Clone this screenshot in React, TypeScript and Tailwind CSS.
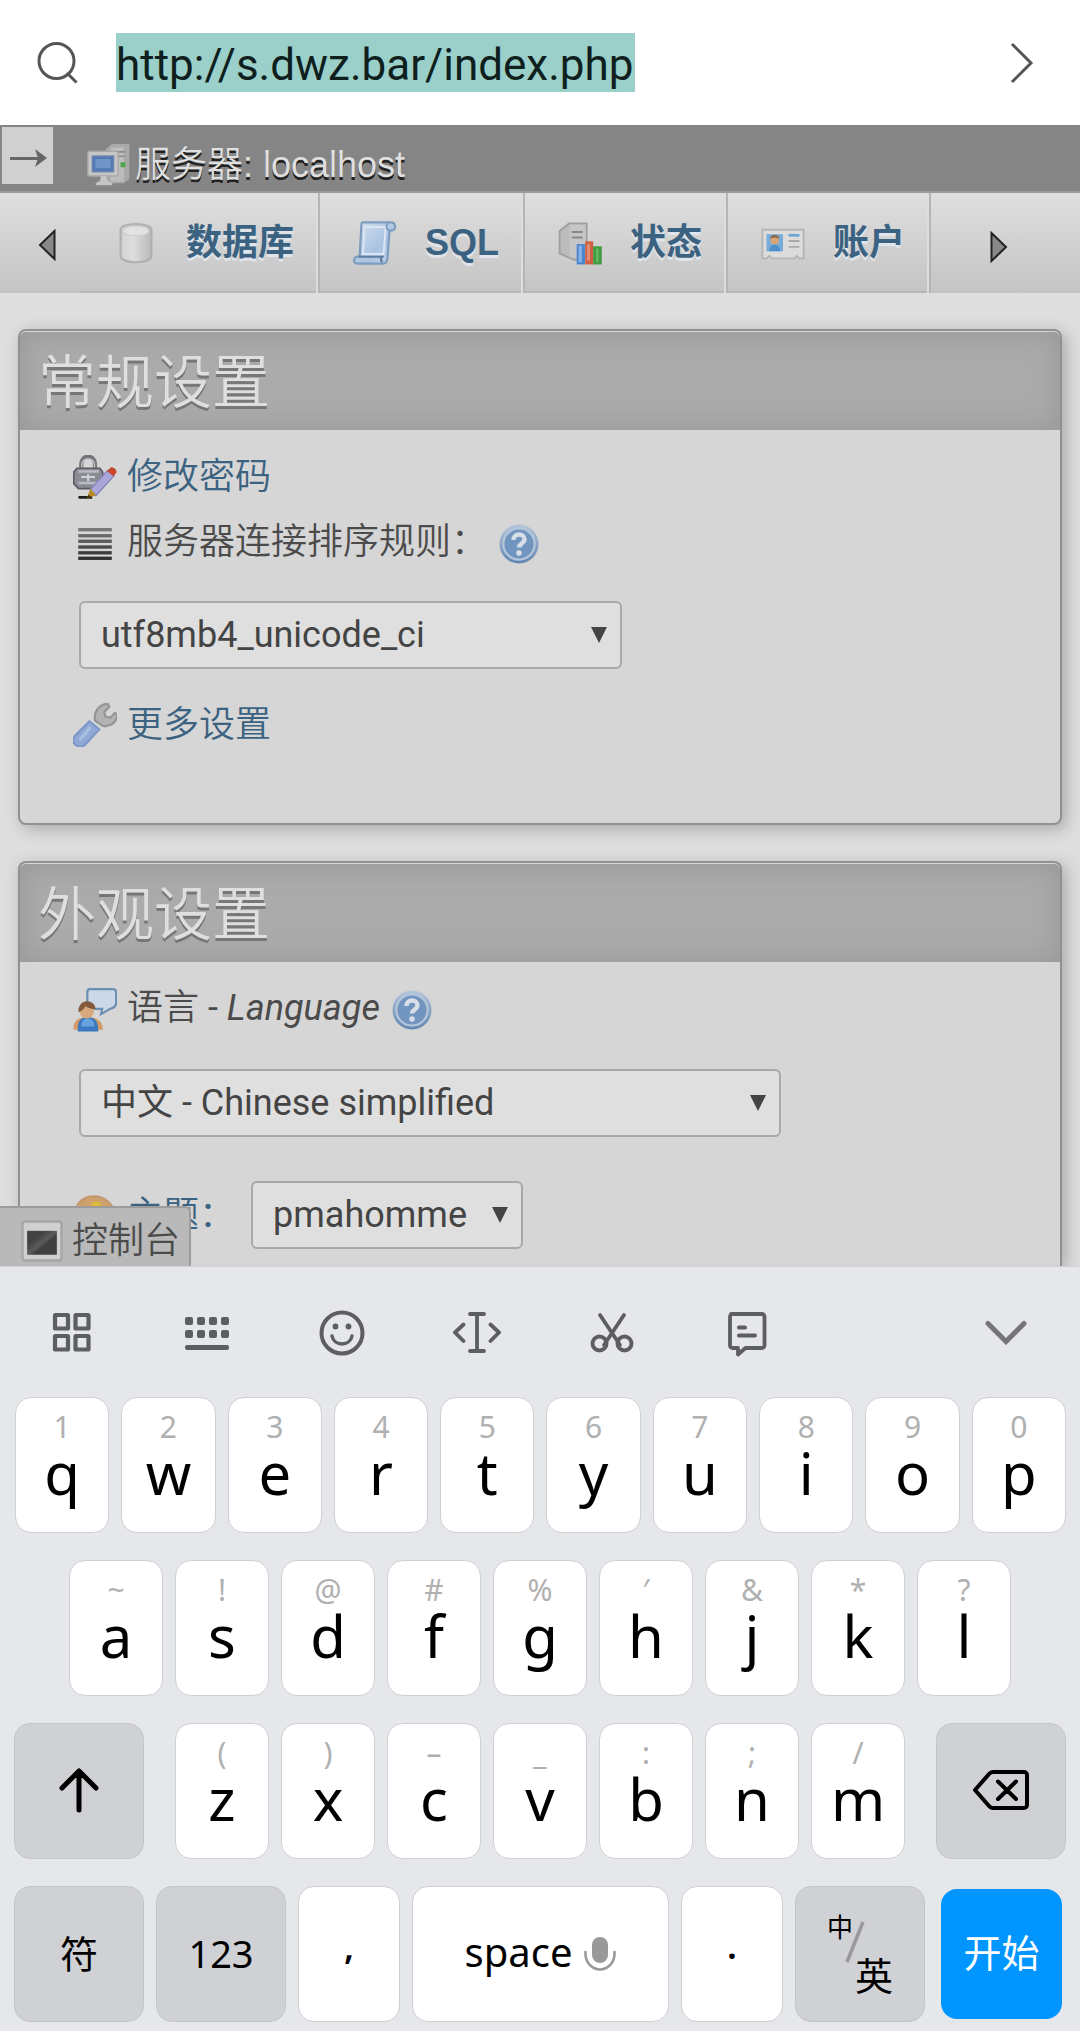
import React from "react";

const NOTO = "font-['Noto_Sans','Noto_Sans_CJK_SC',sans-serif]";

/* ---------- page icons, drawn on a 16 unit grid ---------- */

type IconProps = { children: React.ReactNode };

function PageIcon({ children }: IconProps) {
  return (
    <svg viewBox="0 0 16 16" className="size-11 shrink-0" aria-hidden="true">
      {children}
    </svg>
  );
}

const ServerIcon = () => (
  <PageIcon>
    <path d="M7 2 9 0.4h6.4V13l-2 1.6H7z" fill="#a9a9a9" />
    <path d="M8.6 1.6h4.8V14H8.6z" fill="#bdbdbd" />
    <path d="M10 3.2h4M10 4.8h4" stroke="#8c8c8c" strokeWidth=".6" />
    <rect x="12.2" y="7" width="1.8" height="1.8" fill="#4fa64f" />
    <rect x=".3" y="3" width="11" height="9" rx=".6" fill="#c6c6c6" stroke="#a8a8a8" strokeWidth=".5" />
    <rect x="2" y="4.8" width="7.6" height="5.6" fill="#5279b4" stroke="#6682ad" strokeWidth=".6" />
    <rect x="3" y="5.8" width="5.6" height="3.4" fill="#7094c8" />
    <path d="M5 12h2l.4 1.6 1.8.9v.9H3.2v-.9l1.6-.9z" fill="#c4c4c4" />
  </PageIcon>
);

const DatabaseIcon = () => (
  <PageIcon>
    <defs>
      <linearGradient id="cyl" x1="0" x2="1">
        <stop offset="0" stopColor="#d2d2d2" />
        <stop offset=".4" stopColor="#dedede" />
        <stop offset="1" stopColor="#b8b8b8" />
      </linearGradient>
    </defs>
    <path d="M2.4 3.2C2.4.4 13.6.4 13.6 3.2v9.4c0 3.2-11.2 3.2-11.2 0z" fill="url(#cyl)" stroke="#b0b0b0" strokeWidth=".8" />
    <ellipse cx="8" cy="3.6" rx="4.8" ry="1.8" fill="#e2e2e2" stroke="#cccccc" strokeWidth=".4" />
  </PageIcon>
);

const SqlIcon = () => (
  <PageIcon>
    <defs>
      <linearGradient id="scroll" x1="0" y1="0" x2="1" y2="1">
        <stop offset="0" stopColor="#d7e2ee" />
        <stop offset=".6" stopColor="#a9c3e2" />
        <stop offset="1" stopColor="#c6d6e8" />
      </linearGradient>
    </defs>
    <path d="M3.4.5h10.4c2 0 2 3 .2 3h-.7l-.8 10.2c-.1 1-.6 1.800-1.600 1.800H1.600c-1.700 0-1.600-2.400.2-2.600h.6L3 2.600C3 1.500 3 .5 3.400.5z" fill="url(#scroll)" stroke="#7d9dbf" strokeWidth=".8" />
    <path d="M4.200 2.200 3.600 12h7.500l.8-9.800z" fill="none" stroke="#dbe6f2" strokeWidth=".7" />
    <path d="M2 13h8.600c-.6.6-.5 1.600.1 2" fill="none" stroke="#5d7da3" strokeWidth=".8" />
    <path d="M12.800.8c-1 .6-.8 2.200.2 2.600" fill="none" stroke="#7d9dbf" strokeWidth=".7" />
  </PageIcon>
);

const StatusIcon = () => (
  <PageIcon>
    <path d="M.6 3.600 4 .9h6.400v13L6 14.200.6 11.800z" fill="#bcbcbc" stroke="#a0a0a0" strokeWidth=".7" />
    <path d="M4.200 1.300h5.800v11.900H4.200z" fill="#c6c6c6" />
    <path d="M5 4h4M5 6h4" stroke="#888" strokeWidth=".7" />
    <rect x="6.800" y="8.400" width="3" height="7.400" fill="#4a85cf" />
    <rect x="7.500" y="9" width="1.200" height="6" fill="#86b0e6" />
    <rect x="9.900" y="7.400" width="2.900" height="8.400" fill="#cf5f42" />
    <rect x="10.600" y="8.400" width="1" height="6" fill="#e0917a" />
    <rect x="12.800" y="9.200" width="3.100" height="6.600" fill="#3d9a3d" />
    <rect x="13.800" y="10" width="1" height="5" fill="#64b564" />
  </PageIcon>
);

const AccountIcon = () => (
  <PageIcon>
    <path d="M.5 3.200h15v10.400h-1.700l-.8-.9-.9.9H3.900l-.9-.9-.8.9H.5z" fill="#dcdcdc" stroke="#b5b5b5" strokeWidth=".7" />
    <rect x="2" y="4.800" width="6" height="6.200" fill="#79add9" />
    <circle cx="5" cy="7" r="1.600" fill="#d6a578" />
    <path d="M3.300 6.500c.2-2 3.200-2 3.400 0-.8-.6-2.600-.6-3.400 0z" fill="#8a6a4a" />
    <path d="M3 11c0-3.200 4-3.200 4 0z" fill="#4e8fcb" />
    <path d="M10 5.200h4" stroke="#6fa6d6" strokeWidth="1" />
    <path d="M10 7.300h4M10 9.400h4" stroke="#a9a9a9" strokeWidth=".7" />
  </PageIcon>
);

const PasswordIcon = () => (
  <PageIcon>
    <path d="M3 5.500V3.200C3-.3 8-.3 8 3.200v2.300" fill="none" stroke="#74747c" strokeWidth="1.500" />
    <path d="M3.200 5V3.400c0-2.600 4.600-2.600 4.600 0V5" fill="none" stroke="#c3c3c8" strokeWidth=".5" />
    <path d="M1.400 4.800h8.400L10.800 6.200v4.200l-1.300 1.800H2L.3 10.400V6.200z" fill="#8b8b93" stroke="#5c5c64" strokeWidth=".6" />
    <path d="M2 6h7.400M2 10.200h7" stroke="#bcbcc4" strokeWidth=".9" />
    <path d="M3 8h5M5.500 7v2.500" stroke="#d2d2da" strokeWidth=".8" />
    <path d="M2 15.400h5" stroke="#1c1c1c" strokeWidth="1" />
    <path d="M6.300 12.500 12.600 5.600l2.300 2L8.300 14.800z" fill="#a9a6da" stroke="#8683b8" strokeWidth=".5" />
    <path d="M12.400 5.800 13.600 4.600c1-.5 2.400.8 2.200 1.800l-1.100 1.300z" fill="#c9452e" />
    <path d="M6.300 12.300 5 15.800l3.400-1.200z" fill="#b78b23" />
    <path d="m5.600 14.500-.6 1.300 1.700-.6z" fill="#3b2b0c" />
  </PageIcon>
);

const CollationIcon = () => (
  <PageIcon>
    {[2.8, 5, 7, 9.1, 11.2, 13.2].map((y, i) => (
      <rect key={y} x="1.900" y={y - 0.6} width="12.200" height="1.200" fill={["#777", "#6a6a6a", "#5a5a5a", "#4a4a4a", "#3c3c3c", "#303030"][i]} />
    ))}
  </PageIcon>
);

const HelpIcon = () => (
  <PageIcon>
    <defs>
      <linearGradient id="help" x1="0" y1="0" x2="0" y2="1">
        <stop offset="0" stopColor="#b5c6da" />
        <stop offset="1" stopColor="#6185b1" />
      </linearGradient>
    </defs>
    <circle cx="8" cy="8" r="7.100" fill="url(#help)" />
    <circle cx="8" cy="8" r="5.700" fill="#7195bf" stroke="#b4c6dc" strokeWidth=".8" />
    <path d="M6 6.500c0-2.600 4-2.600 4-.2 0 1.500-2 1.500-2 3" fill="none" stroke="#d8dfe8" strokeWidth="1.600" />
    <circle cx="8" cy="11.300" r="1" fill="#d8dfe8" />
  </PageIcon>
);

const WrenchIcon = () => (
  <PageIcon>
    <path d="M8 6.400c-.5-2.800 1-5.700 4.600-6.200l.6 1.200-1.800 1.800.4 1.700 1.900.4 1.400-1.600.9.2c.2 3-2.200 4.900-5.200 4.400z" fill="#b3b3b3" stroke="#959595" strokeWidth=".8" />
    <path d="M6 6.600 9.600 9.600 4.400 15.200c-1.200 1.200-2.600.8-3.600 0-1-1-.9-2.400 0-3.400z" fill="#8fa9d6" stroke="#7a96c6" strokeWidth=".7" />
    <path d="M6.400 8.800 2.400 13.500" stroke="#a9bde0" strokeWidth="1.300" />
  </PageIcon>
);

const LanguageIcon = () => (
  <PageIcon>
    <path d="M6.200.4h8.200c.8 0 1.300.6 1.300 1.300v3.600c0 1.200-.9 2-2 2.200l-3.500 2 .4-1.900H8C6.400 7.200 5.200 6.200 5.200 4.800V1.600C5.200.9 5.600.4 6.200.4z" fill="#ccd8e7" stroke="#6b8fb3" strokeWidth=".8" />
    <path d="M.2 15.200c-.2-3 1.200-4.600 5-4.600s5.800 1.600 5.600 4.600z" fill="#d29b68" />
    <path d="M1.700 15.800c0-3.800.8-5.200 3.600-5.200s3.900 1.400 3.900 5.200z" fill="#3c78bf" />
    <path d="M3 14c0-2 1-2.800 2.400-2.800S7.800 12 7.800 14z" fill="#68a3e0" />
    <circle cx="5" cy="8.500" r="2.600" fill="#d8a87c" />
    <path d="M2 8.800C1.600 3.600 8 3.700 8.200 7.600 6.600 7.700 5 6.900 4.500 6.500 4 7.700 3 8.300 2 8.800z" fill="#84583a" />
  </PageIcon>
);

const ThemeIcon = () => (
  <PageIcon>
    <path d="M1 7c0-3.600 3-5.800 6.600-5.800S15 3.800 15 7.500 12 14 8 14c-3 0-2-2.400-3.400-3.300C3.200 9.800 1 9.500 1 7z" fill="#cf9f6c" stroke="#c39a70" strokeWidth=".7" />
    <circle cx="8.500" cy="5" r="2" fill="#dcb93a" />
    <circle cx="12" cy="8" r="1.500" fill="#c9623c" />
  </PageIcon>
);

const ConsoleIcon = () => (
  <PageIcon>
    <defs>
      <linearGradient id="term" x1="0" y1="0" x2="1" y2="1">
        <stop offset=".3" stopColor="#424242" />
        <stop offset=".5" stopColor="#5c5c5c" />
        <stop offset=".6" stopColor="#404040" />
      </linearGradient>
    </defs>
    <rect x=".9" y=".9" width="14.200" height="14.200" rx="1" fill="#d0d0d0" stroke="#a6a6a6" strokeWidth=".9" />
    <rect x="2.600" y="4.300" width="10.800" height="8.700" fill="url(#term)" />
  </PageIcon>
);

/* ---------- building blocks ---------- */

function Card({ title, last, children }: { title: string; last?: boolean; children: React.ReactNode }) {
  return (
    <section
      className={
        last
          ? "mx-[18px] mt-9 rounded-t-lg border-2 border-b-0 border-[#919191] bg-[#d6d6d6] shadow-[4px_4px_16px_#a8a8a8]"
          : "mx-[18px] mt-9 rounded-lg border-2 border-[#919191] bg-[#d6d6d6] shadow-[4px_4px_16px_#a8a8a8]"
      }
    >
      <h2 className="mt-px flex h-[98px] items-center rounded-t-md bg-[#ababab] px-[18px] pt-1 text-[58px] font-[350] text-[#dfdfdf] shadow-[inset_0_0_30px_#969696] [text-shadow:0_3px_0_#777]">
        {title}
      </h2>
      <div className={last ? "pl-[53px] pt-[26px] pb-[17px]" : "pl-[53px] pt-[26px] pb-[74px]"}>{children}</div>
    </section>
  );
}

function Select({ id, value, size, label }: { id: string; value: string; size: string; label?: string }) {
  return (
    <div className={`relative ${size}`}>
      <select
        id={id}
        aria-label={label}
        className="h-[68px] w-full appearance-none rounded-md border-2 border-[#a9a9a9] bg-[#dfdfdf] pl-5 text-[36px] font-normal text-[#444]"
      >
        <option>{value}</option>
      </select>
      <svg viewBox="0 0 16 16" className="pointer-events-none absolute right-[15px] top-[26px] size-4" aria-hidden="true">
        <path d="M0 0h16L8 16z" fill="#444" />
      </svg>
    </div>
  );
}

function Tab({ icon, label }: { icon: React.ReactNode; label: string }) {
  return (
    <a
      href="#"
      className="flex items-center gap-7 border-r-2 border-[#b5b5b5] pl-[33px] pr-6 font-['Liberation_Sans','Noto_Sans_CJK_SC',sans-serif] text-[36px] font-bold text-[#3b6281] shadow-[inset_-2px_0_0_#dedede,inset_0_-2px_0_#b8b8b8] [text-shadow:0_3px_0_#dfe5ea]"
    >
      {icon}
      {label}
    </a>
  );
}

function LetterKey({ hint, letter }: { hint: string; letter: string }) {
  return (
    <button className="flex h-[136px] min-w-0 flex-1 flex-col items-center rounded-2xl border border-[#cfd0d3] bg-white pt-[11px]">
      <span className="text-[30px] leading-9 text-[#b0b0b0]">{hint}</span>
      <span className="text-[58px] leading-14 text-black">{letter}</span>
    </button>
  );
}

const DARK_KEY = "flex h-[136px] w-[130px] shrink-0 items-center justify-center rounded-2xl border border-[#c5c6ca] bg-[#d0d1d5] pb-[2px] text-[38px] text-black";
const LIGHT_KEY = "flex h-[136px] items-center justify-center rounded-2xl border border-[#cfd0d3] bg-white text-black";

const ROW1 = ["1q", "2w", "3e", "4r", "5t", "6y", "7u", "8i", "9o", "0p"];
const ROW2 = ["~a", "!s", "@d", "#f", "%g", "′h", "&j", "*k", "?l"];
const ROW3 = ["(z", ")x", "–c", "_v", ":b", ";n", "/m"];

function ToolButton({ label, children }: { label: string; children: React.ReactNode }) {
  return (
    <button aria-label={label} className="flex w-[135px] items-center justify-center text-[#5d5e60]">
      <svg viewBox="0 0 48 48" className="size-12" fill="none" stroke="currentColor" strokeWidth="4" strokeLinecap="round" strokeLinejoin="round">
        {children}
      </svg>
    </button>
  );
}

function Keyboard() {
  return (
    <div className={`border-t border-[#d0d1d1] bg-[#e6e7eb] pb-[9px] ${NOTO}`}>
      <div className="flex h-[130px] items-stretch pl-1 pt-[2px]">
        <ToolButton label="Menu">
          <g strokeWidth="4.200">
            <rect x="7" y="6" width="13" height="13.500" rx=".6" />
            <rect x="27.500" y="6" width="13" height="13.500" rx=".6" />
            <rect x="7" y="27" width="13" height="13.500" rx=".6" />
            <rect x="27.500" y="27" width="13" height="13.500" rx=".6" />
          </g>
        </ToolButton>
        <ToolButton label="Keyboard">
          <g fill="currentColor" stroke="none">
            {[2, 14, 26, 38].map((x) => (
              <React.Fragment key={x}>
                <rect x={x} y="8" width="8" height="8" rx="2" />
                <rect x={x} y="21" width="8" height="8" rx="2" />
              </React.Fragment>
            ))}
            <rect x="2" y="36" width="44" height="5" rx="2" />
          </g>
        </ToolButton>
        <ToolButton label="Emoji">
          <circle cx="24" cy="24" r="20.500" />
          <circle cx="17.500" cy="17.500" r="2.900" fill="currentColor" stroke="none" />
          <circle cx="30.500" cy="17.500" r="2.900" fill="currentColor" stroke="none" />
          <path d="M14 27c2 10.500 18 10.500 20 0" strokeWidth="3.500" />
        </ToolButton>
        <ToolButton label="Move cursor">
          <path d="M24 5v37M17 5h14M17 42h14M10.500 15.500 2 23.500l8.500 8.500M37.500 15.500l8.500 8-8.500 8.500" strokeWidth="3.800" />
        </ToolButton>
        <ToolButton label="Cut">
          <path d="M12 6 32 36M36 6 16 36" strokeWidth="3.800" />
          <circle cx="11.500" cy="34.500" r="7" />
          <circle cx="36.500" cy="34.500" r="7" />
        </ToolButton>
        <ToolButton label="Notes">
          <path d="M8 5h31a2.500 2.500 0 0 1 2.500 2.500v29a2.500 2.500 0 0 1-2.500 2.500H22.500L15 45.500V39H9.500A2.500 2.500 0 0 1 7 36.500v-29A2.500 2.500 0 0 1 9.500 5" strokeWidth="3.800" />
          <path d="M16 18.500h6M16 26.500h16" />
        </ToolButton>
        <button aria-label="Hide keyboard" className="ml-auto mr-[50px] flex items-center text-[#747578]">
          <svg viewBox="0 0 48 48" className="size-12" fill="none" stroke="currentColor" strokeWidth="5" strokeLinecap="round">
            <path d="m6 14.500 18 18 18-18" />
          </svg>
        </button>
      </div>

      <div className="flex flex-col gap-[27px] px-[14px]">
        <div className="flex gap-3 pl-px">
          {ROW1.map((k) => (
            <LetterKey key={k} hint={k[0]} letter={k[1]} />
          ))}
        </div>
        <div className="flex gap-3 px-[55px]">
          {ROW2.map((k) => (
            <LetterKey key={k} hint={k[0]} letter={k[1]} />
          ))}
        </div>
        <div className="flex gap-[31px]">
          <button aria-label="Shift" className={DARK_KEY}>
            <svg viewBox="0 0 48 48" className="size-12" fill="none" stroke="currentColor" strokeWidth="5" strokeLinecap="round" strokeLinejoin="round">
              <path d="M24 44V5M7 22 24 5l17 17" />
            </svg>
          </button>
          <div className="flex flex-1 gap-3">
            {ROW3.map((k) => (
              <LetterKey key={k} hint={k[0]} letter={k[1]} />
            ))}
          </div>
          <button aria-label="Backspace" className={DARK_KEY}>
            <svg viewBox="0 0 56 40" className="h-10 w-14" fill="none" stroke="currentColor" strokeWidth="4" strokeLinecap="round" strokeLinejoin="round">
              <path d="M20 2h31a3 3 0 0 1 3 3v30a3 3 0 0 1-3 3H20c-1.500 0-2.500-.6-3.500-1.500L2 20 16.500 3.500C17.500 2.600 18.500 2 20 2zM25 11.500l18 17.500M43 11.500 25 29" />
            </svg>
          </button>
        </div>
        <div className="flex gap-3">
          <button className={DARK_KEY}>符</button>
          <button className={DARK_KEY}>123</button>
          <button className={`${LIGHT_KEY} w-[102px] pb-4 text-[36px] font-semibold`}>,</button>
          <button className={`${LIGHT_KEY} flex-1 gap-3 pb-1 text-[40px]`}>
            space
            <svg viewBox="0 0 32 36" className="mt-1 h-9 w-8" fill="none" aria-hidden="true">
              <rect x="8" y="1" width="16" height="26" rx="8" fill="#999" />
              <path d="M1.500 16v2a14.500 15.500 0 0 0 29 0v-2" stroke="#999" strokeWidth="2.600" strokeLinecap="round" />
            </svg>
          </button>
          <button className={`${LIGHT_KEY} w-[102px] pb-4 text-[36px] font-semibold`}>.</button>
          <button className={DARK_KEY}>
            <span className="flex h-20 items-stretch">
              <span className="text-[26px] leading-7">中</span>
              <svg viewBox="0 0 20 42" className="-ml-2 -mr-[10px] mt-2 h-[42px] w-5" aria-hidden="true">
                <path d="M18 1 2 41" stroke="#999" strokeWidth="3.500" />
              </svg>
              <span className="self-end leading-9">英</span>
            </span>
          </button>
          <button className="mx-1 my-[3px] flex w-[121px] shrink-0 items-center justify-center rounded-2xl bg-[#0095ff] pb-1 text-[38px] text-white">
            开始
          </button>
        </div>
      </div>
    </div>
  );
}

export default function App() {
  return (
    <div className="flex flex-col bg-[#dedede] font-[Roboto,'Noto_Sans_CJK_SC',sans-serif] text-[36px] text-[#4b4b4b]">
      <form className="flex h-[125px] items-center bg-white pl-[36px] pr-9" onSubmit={(e) => e.preventDefault()}>
        <svg viewBox="0 0 44 44" className="size-11 shrink-0" fill="none" stroke="#555" strokeWidth="3" aria-hidden="true">
          <circle cx="20.500" cy="20" r="17.500" />
          <path d="m31 32 9.500 9.500" />
        </svg>
        <input
          aria-label="Address"
          defaultValue="http://s.dwz.bar/index.php"
          className="ml-9 h-[59px] bg-[#9bcfc9] pr-[2px] pt-1 text-[44px] text-[#0e1f1d] outline-none field-sizing-content"
        />
        <button aria-label="Go" className="ml-auto">
          <svg viewBox="0 0 44 44" className="size-11" fill="none" stroke="#555" strokeWidth="3">
            <path d="m12 3 19 19-19 19" />
          </svg>
        </button>
      </form>

      <main className="relative overflow-hidden">
        <header className="flex h-[68px] items-start border-b-2 border-[#9a9a9a] bg-[#858585]">
          <button aria-label="Open navigation" className="ml-[2px] mt-[2px] flex h-[57px] w-[51px] items-center justify-center bg-[#d0d0d0] pt-1">
            <svg viewBox="0 0 40 20" className="h-5 w-10" aria-hidden="true">
              <path d="M2 9h28v3H2z" fill="#666" />
              <path d="m27 1 12 9-12 9 3-9z" fill="#666" />
            </svg>
          </button>
          <a
            href="#"
            className="ml-[34px] mt-[18px] flex items-center gap-1 font-['Liberation_Sans','Noto_Sans_CJK_SC',sans-serif] leading-[44px] font-[350] text-[#dfdfdf] [text-shadow:0_3px_0_#222]"
          >
            <ServerIcon />
            服务器: localhost
          </a>
        </header>

        <nav className="flex h-[100px] bg-linear-to-b from-[#dfdfdf] to-[#c4c4c4]">
          <button aria-label="Scroll tabs left" className="flex w-[81px] items-center justify-center pl-3 pt-1">
            <svg viewBox="0 0 18 32" className="h-8 w-[18px]" aria-hidden="true">
              <path d="M16.500 2v28L2 16z" fill="#888" stroke="#222" strokeWidth="2" />
            </svg>
          </button>
          <Tab icon={<DatabaseIcon />} label="数据库" />
          <Tab icon={<SqlIcon />} label="SQL" />
          <Tab icon={<StatusIcon />} label="状态" />
          <Tab icon={<AccountIcon />} label="账户" />
          <button aria-label="Scroll tabs right" className="flex flex-1 items-center pl-[59px] pt-2">
            <svg viewBox="0 0 18 32" className="h-8 w-[18px]" aria-hidden="true">
              <path d="M1.500 2v28L16 16z" fill="#888" stroke="#222" strokeWidth="2" />
            </svg>
          </button>
        </nav>

        <Card title="常规设置">
          <a href="#" className="flex h-11 items-center gap-[10px] pb-[2px] font-[350] text-[#3b6281]">
            <PasswordIcon />
            修改密码
          </a>
          <div className="mt-[22px] flex h-11 items-center">
            <CollationIcon />
            <label htmlFor="collation" className="ml-[10px] pb-1 font-[350]">
              服务器连接排序规则：
            </label>
            <button aria-label="Collation help" className="ml-[10px]">
              <HelpIcon />
            </button>
          </div>
          <div className="ml-[6px] mt-[35px]">
            <Select id="collation" value="utf8mb4_unicode_ci" size="w-[543px]" />
          </div>
          <a href="#" className="mt-9 flex h-11 items-center gap-[10px] pb-1 font-[350] text-[#3b6281]">
            <WrenchIcon />
            更多设置
          </a>
        </Card>

        <Card title="外观设置" last>
          <div className="flex h-11 items-center">
            <LanguageIcon />
            <label htmlFor="language" className="ml-[10px] pb-1">
              <span className="font-[350]">语言</span> - <em>Language</em>
            </label>
            <button aria-label="Language help" className="ml-[10px]">
              <HelpIcon />
            </button>
          </div>
          <div className="ml-[6px] mt-[37px]">
            <Select id="language" value="中文 - Chinese simplified" size="w-[702px]" />
          </div>
          <div className="mt-11 flex items-center">
            <ThemeIcon />
            <a href="#" className="ml-[10px] font-[350] text-[#3b6281]">
              主题：
            </a>
            <div className="ml-4">
              <Select id="theme" label="主题" value="pmahomme" size="w-[272px]" />
            </div>
          </div>
        </Card>

        <button className="absolute bottom-0 left-0 flex h-[60px] items-center gap-2 rounded-tr-md border-r-2 border-t-2 border-[#9c9c9c] bg-[#b9b9b9] pl-5 pr-[9px] pt-2 font-[350]">
          <ConsoleIcon />
          控制台
        </button>
      </main>

      <Keyboard />
    </div>
  );
}
